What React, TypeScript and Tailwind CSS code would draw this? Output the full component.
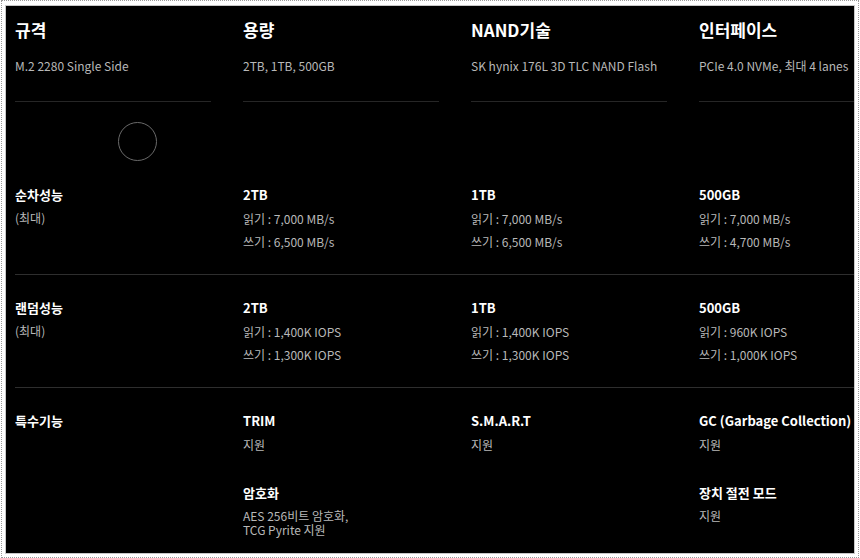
import React from "react";

const font = { fontFamily: '"Noto Sans CJK KR", "Noto Sans", sans-serif' };

type Group = { title: string; lines: string[] };

const headers = [
  { title: "규격", sub: "M.2 2280 Single Side" },
  { title: "용량", sub: "2TB, 1TB, 500GB" },
  { title: "NAND기술", sub: "SK hynix 176L 3D TLC NAND Flash" },
  { title: "인터페이스", sub: "PCIe 4.0 NVMe, 최대 4 lanes" },
];

const rows: { label: string; sub?: string; cols: Group[][]; last?: boolean }[] = [
  {
    label: "순차성능",
    sub: "(최대)",
    cols: [
      [{ title: "2TB", lines: ["읽기 : 7,000 MB/s", "쓰기 : 6,500 MB/s"] }],
      [{ title: "1TB", lines: ["읽기 : 7,000 MB/s", "쓰기 : 6,500 MB/s"] }],
      [{ title: "500GB", lines: ["읽기 : 7,000 MB/s", "쓰기 : 4,700 MB/s"] }],
    ],
  },
  {
    label: "랜덤성능",
    sub: "(최대)",
    cols: [
      [{ title: "2TB", lines: ["읽기 : 1,400K IOPS", "쓰기 : 1,300K IOPS"] }],
      [{ title: "1TB", lines: ["읽기 : 1,400K IOPS", "쓰기 : 1,300K IOPS"] }],
      [{ title: "500GB", lines: ["읽기 : 960K IOPS", "쓰기 : 1,000K IOPS"] }],
    ],
  },
  {
    label: "특수기능",
    last: true,
    cols: [
      [
        { title: "TRIM", lines: ["지원"] },
        { title: "암호화", lines: ["AES 256비트 암호화,\nTCG Pyrite 지원"] },
      ],
      [{ title: "S.M.A.R.T", lines: ["지원"] }],
      [
        { title: "GC (Garbage Collection)", lines: ["지원"] },
        { title: "장치 절전 모드", lines: ["지원"] },
      ],
    ],
  },
];

function GroupBlock({ g, first }: { g: Group; first: boolean }) {
  return (
    <div className={first ? "" : "mt-[33px]"}>
      <p className="text-[13px] font-bold leading-[15px] text-white whitespace-nowrap">{g.title}</p>
      {g.lines.map((l, i) => (
        <p key={i} className="mt-[9px] text-[12px] leading-[14px] pt-[0.5px] text-[#b8b8b8] whitespace-pre-line">
          {l}
        </p>
      ))}
    </div>
  );
}

export default function App() {
  return (
    <div className="w-[860px] h-[558px] bg-white pl-px" style={font}>
      <div className="w-[858px] h-[558px] border border-dotted border-[#9a9a9a] pt-[4px] pb-[3px] px-[3px]">
        <div className="relative w-[850px] h-[549px] border border-[#c8c8c8] bg-black overflow-hidden">
          <div className="pl-[9px] w-[900px]">
            {/* header */}
            <div className="flex gap-[32px] pt-[14px]">
              {headers.map((h) => (
                <div key={h.title} className="w-[196px] shrink-0 border-b border-[#262626] pb-[28px]">
                  <p className="text-[17px] font-bold leading-[20px] text-white">{h.title}</p>
                  <p className="mt-[18px] text-[12px] leading-[15px] text-[#b8b8b8] whitespace-nowrap">{h.sub}</p>
                </div>
              ))}
            </div>
            {/* rows */}
            <div className="mt-[60px]">
              {rows.map((r) => (
                <div
                  key={r.label}
                  className={
                    "flex gap-[32px] pt-[25px] pb-[25px] " + (r.last ? "" : "border-b border-[#2e2e2e]")
                  }
                >
                  <div className="w-[196px] shrink-0">
                    <p className="text-[13px] font-bold leading-[15px] text-white">{r.label}</p>
                    {r.sub && (
                      <p className="mt-[8px] text-[12px] leading-[15px] text-[#b8b8b8]">{r.sub}</p>
                    )}
                  </div>
                  {r.cols.map((c, ci) => (
                    <div key={ci} className="w-[196px] shrink-0">
                      {c.map((g, gi) => (
                        <GroupBlock key={gi} g={g} first={gi === 0} />
                      ))}
                    </div>
                  ))}
                </div>
              ))}
            </div>
          </div>
          <div className="absolute left-[112px] top-[116px] w-[39px] h-[39px] rounded-full border border-[#6a6a6a]" />
        </div>
      </div>
    </div>
  );
}
